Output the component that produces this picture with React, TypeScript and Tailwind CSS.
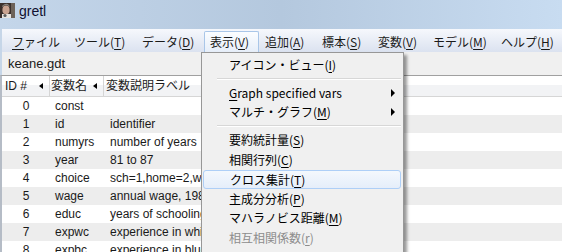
import React from "react";

const MENUS = [
  { pre: "", key: "フ", post: "ァイル", w: "w-[62px]" },
  { pre: "ツール(", key: "T", post: ")", w: "w-[68px]" },
  { pre: "データ(", key: "D", post: ")", w: "w-[68px]" },
  { pre: "表示(", key: "V", post: ")", w: "w-[55px]", active: true },
  { pre: "追加(", key: "A", post: ")", w: "w-[57px]" },
  { pre: "標本(", key: "S", post: ")", w: "w-[56px]" },
  { pre: "変数(", key: "V", post: ")", w: "w-[55px]" },
  { pre: "モデル(", key: "M", post: ")", w: "w-[68px]" },
  { pre: "ヘルプ(", key: "H", post: ")", w: "w-[60px]" },
];

const ROWS = [
  ["0", "const", ""],
  ["1", "id", "identifier"],
  ["2", "numyrs", "number of years"],
  ["3", "year", "81 to 87"],
  ["4", "choice", "sch=1,home=2,work=3"],
  ["5", "wage", "annual wage, 1987 dollars"],
  ["6", "educ", "years of schooling"],
  ["7", "expwc", "experience in white collar"],
  ["8", "expbc", "experience in blue collar"],
];

type Item =
  | { sep: true; h: string }
  | { sep?: false; pre: string; key: string; post: string; h: string; sub?: boolean; hot?: boolean; off?: boolean };

const ITEMS: Item[] = [
  { pre: "アイコン・ビュー(", key: "I", post: ")", h: "h-[20px]" },
  { sep: true, h: "h-[8px]" },
  { pre: "", key: "G", post: "raph specified vars", h: "h-[19px]", sub: true },
  { pre: "マルチ・グラフ(", key: "M", post: ")", h: "h-[19px]", sub: true },
  { sep: true, h: "h-[9px]" },
  { pre: "要約統計量(", key: "S", post: ")", h: "h-[20px]" },
  { pre: "相関行列(", key: "C", post: ")", h: "h-[20px]" },
  { pre: "クロス集計(", key: "T", post: ")", h: "h-[19px]", hot: true },
  { pre: "主成分分析(", key: "P", post: ")", h: "h-[19px]" },
  { pre: "マハラノビス距離(", key: "M", post: ")", h: "h-[20px]" },
  { pre: "相互相関係数(", key: "r", post: ")", h: "h-[20px]", off: true },
];

function GretlIcon() {
  return (
    <svg width="15" height="15" viewBox="0 0 15 15">
      <rect width="15" height="15" fill="#3b302c" />
      <ellipse cx="6" cy="7" rx="3.6" ry="4.4" fill="#c9a391" />
      <path d="M2 4 Q6 0 10 4 L9 2 Q6 -1 2 3Z" fill="#8a8580" />
      <rect x="2" y="11" width="9" height="4" fill="#e8e4e0" />
      <circle cx="5" cy="12.5" r="1.6" fill="#5a5a5a" />
      <rect x="11" y="0" width="4" height="15" fill="#6d6259" />
    </svg>
  );
}

function SortArrow() {
  return <span className="inline-block w-0 h-0 border-y-[3.5px] border-y-transparent border-r-[4px] border-r-black" />;
}

export default function App() {
  return (
    <div className="relative w-[562px] h-[252px] overflow-hidden bg-white font-['Liberation_Sans','Noto_Sans_CJK_JP',sans-serif] text-[12px] text-[#1a1a1a]">
      <div className="h-[29px] flex items-start pt-[3px] bg-gradient-to-r from-[#c4d6ea] via-[#b4c8de] to-[#c8dcf1]">
        <GretlIcon />
        <span className="ml-[4px] text-[14px] leading-[16px] text-[#101030]">gretl</span>
      </div>

      <div className="h-[23px] flex pt-[2px] pl-[4px] bg-gradient-to-b from-[#f6f8fc] to-[#dbe2f0] border-l-2 border-[#c6d6e8] font-['Noto_Sans_CJK_JP','Liberation_Sans',sans-serif]">
        {MENUS.map((m, i) => (
          <div
            key={i}
            className={`${m.w} h-[21px] flex items-center pl-[5px] leading-none ${
              m.active ? "rounded-t-[2px] border border-b-0 border-[#a9c6e8] bg-gradient-to-b from-[#fbfdff] to-[#e6eef9]" : "border border-transparent"
            }`}
          >
            {m.pre}
            <span className="underline underline-offset-2">{m.key}</span>
            {m.post}
          </div>
        ))}
      </div>

      <div className="h-[23px] flex items-center pl-[6px] bg-[#f0f0f0] text-[13px] border-l-2 border-[#c6d6e8]">keane.gdt</div>

      <div className="border-t border-[#a0a0a0] border-l-2 border-l-[#b5bcc6]">
        <div className="h-[21px] flex border-b border-[#d6d6d6] bg-[linear-gradient(#ffffff_0%,#ffffff_45%,#f2f3f5_46%,#f2f3f5_100%)]">
          <div className="w-[48px] flex items-center justify-between pl-[3px] pr-[6px] border-r border-[#d5d5d5]">
            <span>ID #</span>
            <SortArrow />
          </div>
          <div className="w-[54px] flex items-center justify-between pl-[1px] pr-[6px] border-r border-[#d5d5d5]">
            <span>変数名</span>
            <SortArrow />
          </div>
          <div className="flex items-center pl-[2px]">変数説明ラベル</div>
        </div>
        {ROWS.map((r, i) => (
          <div key={i} className={`h-[18px] flex items-center ${i % 2 ? "bg-[#ededed]" : "bg-white"}`}>
            <div className="w-[50px] text-center pr-[2px]">{r[0]}</div>
            <div className="w-[55px] pl-[3px]">{r[1]}</div>
            <div className="pl-[3px] whitespace-nowrap">{r[2]}</div>
          </div>
        ))}
      </div>

      <div className="absolute left-[201px] top-[52px] w-[203px] h-[215px] border border-[#979797] bg-[#f0f0f0] pt-[2px] shadow-[3px_3px_3px_rgba(0,0,0,0.4)] font-['Noto_Sans_CJK_JP','Liberation_Sans',sans-serif]">
        {ITEMS.map((it, i) =>
          it.sep ? (
            <div key={i} className={`${it.h} flex items-center ml-[15px] mr-[2px]`}>
              <div className="w-full h-[2px] border-t border-[#d7d7d7] border-b border-b-white" />
            </div>
          ) : (
            <div
              key={i}
              className={`${it.h} relative flex items-center ml-[1px] mr-[2px] pl-[26px] leading-none ${
                it.hot ? "rounded-[3px] border border-[#aecff7] bg-gradient-to-b from-[#f4f8fd] to-[#e5eefa] pl-[25px]" : ""
              } ${it.off ? "text-[#8d8d8d]" : "text-black"}`}
            >
              {it.pre}
              <span className="underline underline-offset-2">{it.key}</span>
              {it.post}
              {it.sub && (
                <span className="absolute right-[6px] top-1/2 -translate-y-1/2 w-0 h-0 border-y-[4px] border-y-transparent border-l-[4px] border-l-black" />
              )}
            </div>
          )
        )}
      </div>
    </div>
  );
}
